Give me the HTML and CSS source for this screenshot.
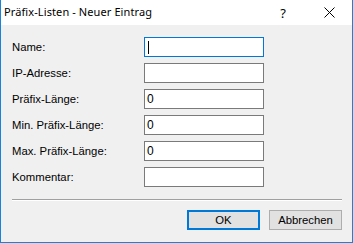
FILE: index.html
```html
<!DOCTYPE html>
<html lang="de">
<head>
    <meta charset="UTF-8">
    <title>Präfix-Listen - Neuer Eintrag</title>
    <link rel="stylesheet" href="styles.css">
</head>
<body>
    <div class="window">
        <div class="titlebar">
            <div class="title">Präfix-Listen - Neuer Eintrag</div>
            <div class="title-btn">?</div>
            <div class="title-btn">
                <svg width="11" height="11" viewBox="0 0 11 11">
                    <path d="M0.5 0.5 L10.5 10.5 M10.5 0.5 L0.5 10.5" stroke="#000" stroke-width="1" fill="none"/>
                </svg>
            </div>
        </div>

        <div class="content">
            <div class="form">
                <label class="label">Name:</label>
                <div class="field focused"><span class="caret"></span></div>

                <label class="label">IP-Adresse:</label>
                <div class="field"></div>

                <label class="label">Präfix-Länge:</label>
                <div class="field">0</div>

                <label class="label">Min. Präfix-Länge:</label>
                <div class="field">0</div>

                <label class="label">Max. Präfix-Länge:</label>
                <div class="field">0</div>

                <label class="label">Kommentar:</label>
                <div class="field"></div>
            </div>

            <div class="separator"></div>

            <div class="buttons">
                <button class="btn default">OK</button>
                <button class="btn">Abbrechen</button>
            </div>
        </div>
    </div>
</body>
</html>
```

FILE: styles.css
```css
body {
    margin: 0;
    background: #fff;
}

.window {
    width: 353px;
    height: 243px;
    box-sizing: border-box;
    border: 1px solid #1883d7;
    border-top: none;
    display: flex;
    flex-direction: column;
    font-family: "Liberation Sans", Arial, sans-serif;
    font-size: 11px;
    color: #000;
}

/* Titelleiste */
.titlebar {
    height: 25px;
    background: #fff;
    display: flex;
    align-items: center;
}

.title {
    flex: 1;
    padding-left: 3px;
    font-family: "Noto Sans", sans-serif;
    font-size: 11px;
    letter-spacing: 0.1px;
    margin-top: -2px;
}

.title-btn {
    width: 46px;
    height: 25px;
    display: flex;
    align-items: center;
    justify-content: center;
    font-family: "Noto Sans", sans-serif;
    font-size: 13px;
}

.content {
    flex: 1;
    background: #f0f0f0;
    padding: 12px 10px 0 11px;
}

.form {
    display: grid;
    grid-template-columns: 132px 120px;
    grid-auto-rows: 20px;
    row-gap: 6px;
    align-items: center;
}

.label {
    font-size: 11.3px;
}

.field {
    height: 20px;
    box-sizing: border-box;
    border: 1px solid #7a7a7a;
    background: #fff;
    padding-left: 2px;
    display: flex;
    align-items: center;
    font-size: 12px;
}

.field.focused {
    border-color: #0078d7;
}

.caret {
    width: 1px;
    height: 13px;
    background: #000;
    margin-left: 1px;
}

.separator {
    height: 1px;
    background: #a0a0a0;
    border-bottom: 1px solid #fff;
    margin-top: 12px;
    width: 330px;
}

.buttons {
    display: flex;
    justify-content: flex-end;
    gap: 9px;
    margin-top: 9px;
    width: 330px;
}

.btn {
    width: 73px;
    height: 20px;
    box-sizing: border-box;
    border: 1px solid #adadad;
    background: #e1e1e1;
    font-family: "Liberation Sans", Arial, sans-serif;
    font-size: 11.3px;
    color: #000;
    padding: 0;
}

.btn.default {
    border: 2px solid #0078d7;
}
```
